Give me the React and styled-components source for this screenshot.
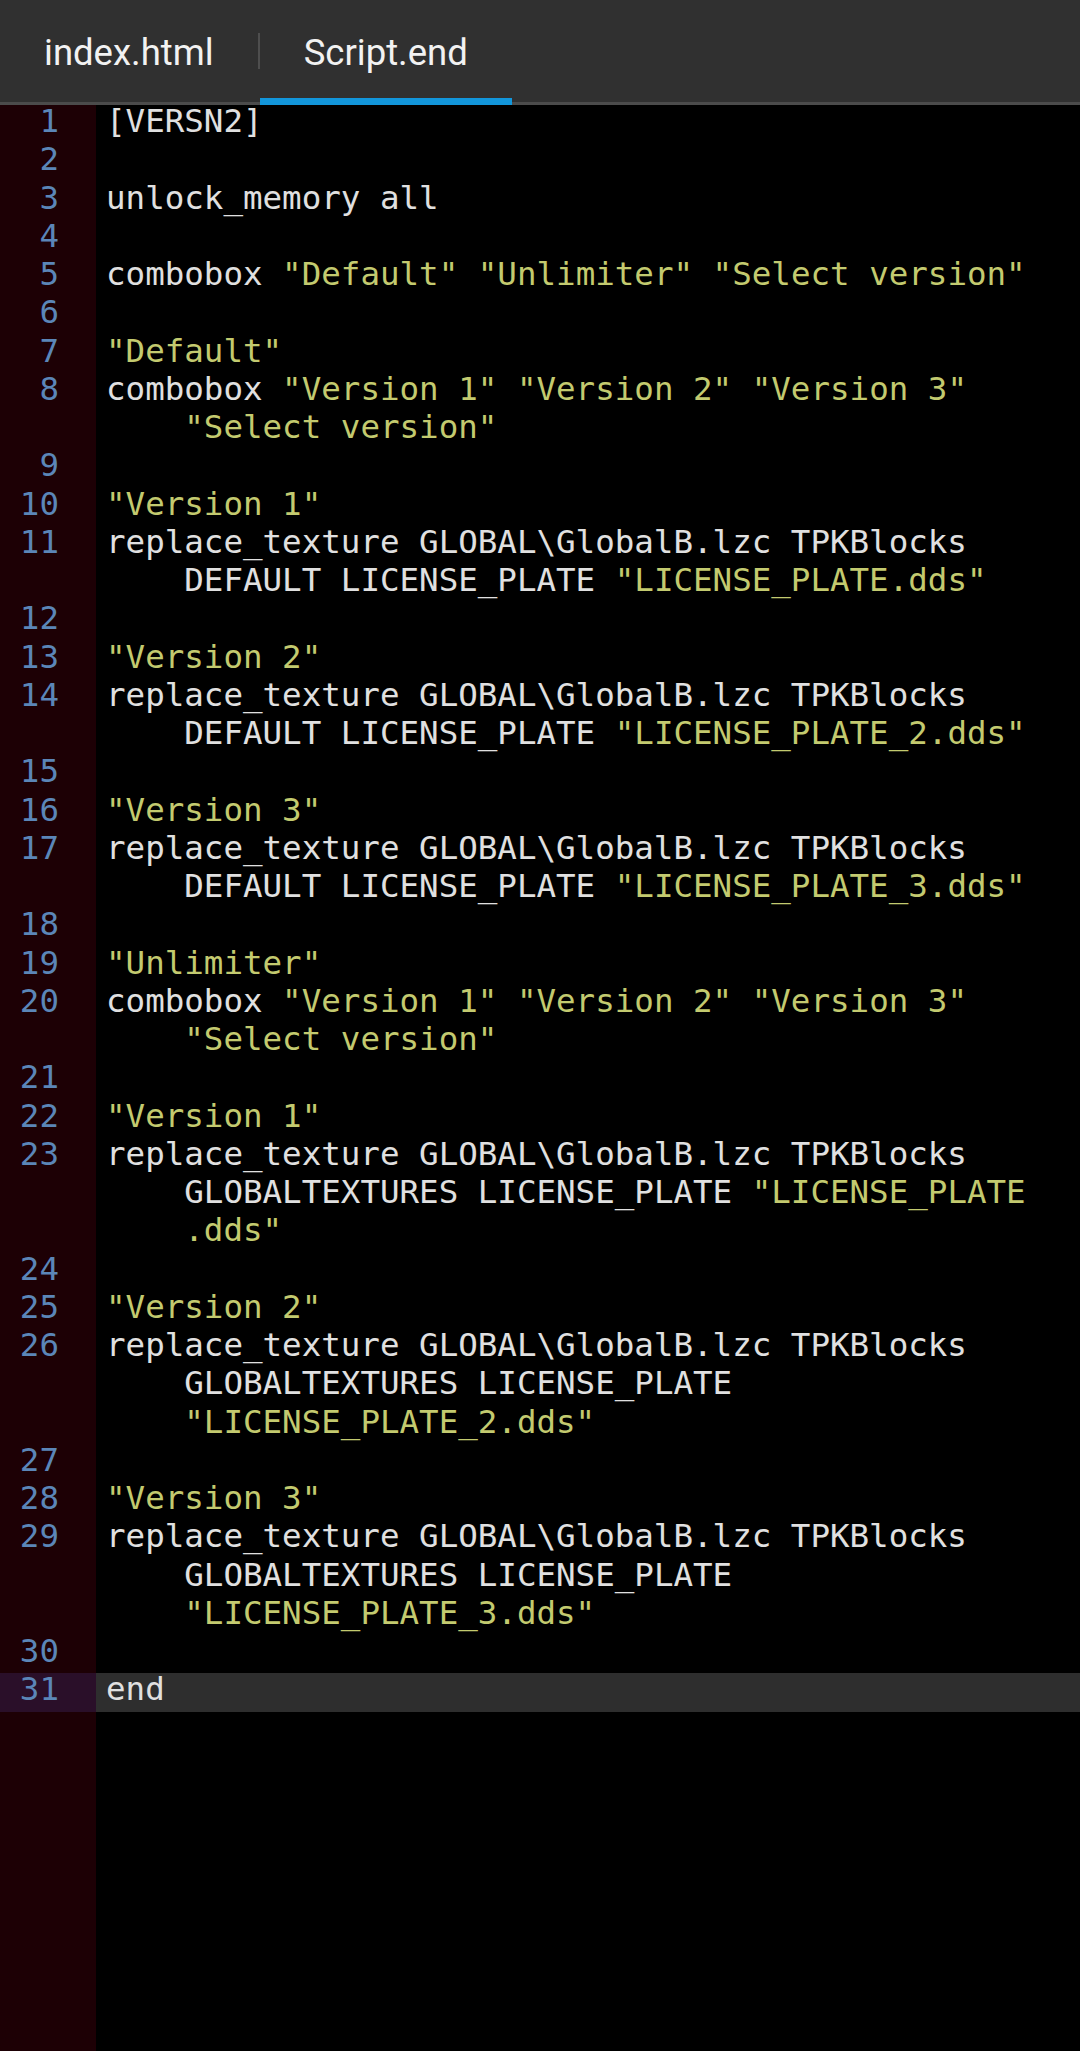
import React from 'react';
import styled, { createGlobalStyle } from 'styled-components';

const GlobalStyle = createGlobalStyle`
	html, body {
		margin: 0;
		padding: 0;
		background: #000;
	}
	#root {
		min-height: 100vh;
		display: flex;
		flex-direction: column;
	}
`;

const lines = [
	['[VERSN2]'],
	[''],
	['unlock_memory all'],
	[''],
	['combobox "Default" "Unlimiter" "Select version"'],
	[''],
	['"Default"'],
	['combobox "Version 1" "Version 2" "Version 3"', '"Select version"'],
	[''],
	['"Version 1"'],
	['replace_texture GLOBAL\\GlobalB.lzc TPKBlocks', 'DEFAULT LICENSE_PLATE "LICENSE_PLATE.dds"'],
	[''],
	['"Version 2"'],
	['replace_texture GLOBAL\\GlobalB.lzc TPKBlocks', 'DEFAULT LICENSE_PLATE "LICENSE_PLATE_2.dds"'],
	[''],
	['"Version 3"'],
	['replace_texture GLOBAL\\GlobalB.lzc TPKBlocks', 'DEFAULT LICENSE_PLATE "LICENSE_PLATE_3.dds"'],
	[''],
	['"Unlimiter"'],
	['combobox "Version 1" "Version 2" "Version 3"', '"Select version"'],
	[''],
	['"Version 1"'],
	['replace_texture GLOBAL\\GlobalB.lzc TPKBlocks', 'GLOBALTEXTURES LICENSE_PLATE "LICENSE_PLATE', '.dds"'],
	[''],
	['"Version 2"'],
	['replace_texture GLOBAL\\GlobalB.lzc TPKBlocks', 'GLOBALTEXTURES LICENSE_PLATE', '"LICENSE_PLATE_2.dds"'],
	[''],
	['"Version 3"'],
	['replace_texture GLOBAL\\GlobalB.lzc TPKBlocks', 'GLOBALTEXTURES LICENSE_PLATE', '"LICENSE_PLATE_3.dds"'],
	[''],
	['end'],
];

const ACTIVE = 31;

// split each visual row into plain / string pieces, keeping the quote state across wraps
const tokenize = (rows) => {
	let inStr = false;
	return rows.map((row) => {
		const parts = [];
		let buf = '';
		for (const ch of row) {
			if (ch === '"') {
				if (inStr) {
					buf += ch;
					parts.push({ str: true, text: buf });
					buf = '';
					inStr = false;
				} else {
					if (buf) parts.push({ str: false, text: buf });
					buf = ch;
					inStr = true;
				}
			} else {
				buf += ch;
			}
		}
		if (buf) parts.push({ str: inStr, text: buf });
		return parts;
	});
};

const Tabs = styled.div`
	display: flex;
	align-items: stretch;
	height: 102px;
	background: #303030;
	border-bottom: 3px solid #4b4b4b;
	font-family: Roboto, 'Noto Sans', sans-serif;
`;

const Tab = styled.div`
	position: relative;
	display: flex;
	align-items: center;
	padding: 3px 44px 0;
	font-size: 36.5px;
	color: #f2f2f2;

	&::after {
		content: '';
		display: ${(p) => (p.active ? 'block' : 'none')};
		position: absolute;
		left: 0;
		right: 0;
		bottom: -3px;
		height: 7px;
		background: #1296db;
	}
`;

const Divider = styled.div`
	align-self: center;
	width: 2px;
	height: 36px;
	background: #4e4e4e;
`;

const Editor = styled.div`
	flex: 1;
	background: linear-gradient(to right, #1d0005 96px, #000 96px);
	font-family: 'DejaVu Sans Mono', 'Liberation Mono', monospace;
	font-size: 32.5px;
	line-height: 33.25px;
`;

const Line = styled.div`
	display: flex;
	background: ${(p) => (p.active ? '#2e2e2e' : 'transparent')};
`;

const Num = styled.div`
	width: 96px;
	flex-shrink: 0;
	box-sizing: border-box;
	padding: 0 37px 5px 0;
	text-align: right;
	color: #5b86b8;
	background: ${(p) => (p.active ? '#2a0f29' : 'transparent')};
`;

const Code = styled.div`
	flex: 1;
	padding-left: 10px;
	color: #e0e0e0;
	white-space: pre;
`;

const Row = styled.div`
	height: 33.25px;
	padding-bottom: 5px;
`;

const Str = styled.span`
	color: #c3ca6f;
`;

const App = () => {
	return (
		<>
			<GlobalStyle />
			<Tabs>
				<Tab>index.html</Tab>
				<Divider />
				<Tab active>Script.end</Tab>
			</Tabs>
			<Editor>
				{lines.map((rows, i) => {
					const n = i + 1;
					return (
						<Line key={n} active={n === ACTIVE}>
							<Num active={n === ACTIVE}>{n}</Num>
							<Code>
								{tokenize(rows).map((parts, r) => (
									<Row key={r}>
										{r > 0 ? '    ' : ''}
										{parts.map((p, k) =>
											p.str ? <Str key={k}>{p.text}</Str> : <span key={k}>{p.text}</span>
										)}
									</Row>
								))}
							</Code>
						</Line>
					);
				})}
			</Editor>
		</>
	);
};

export default App;
